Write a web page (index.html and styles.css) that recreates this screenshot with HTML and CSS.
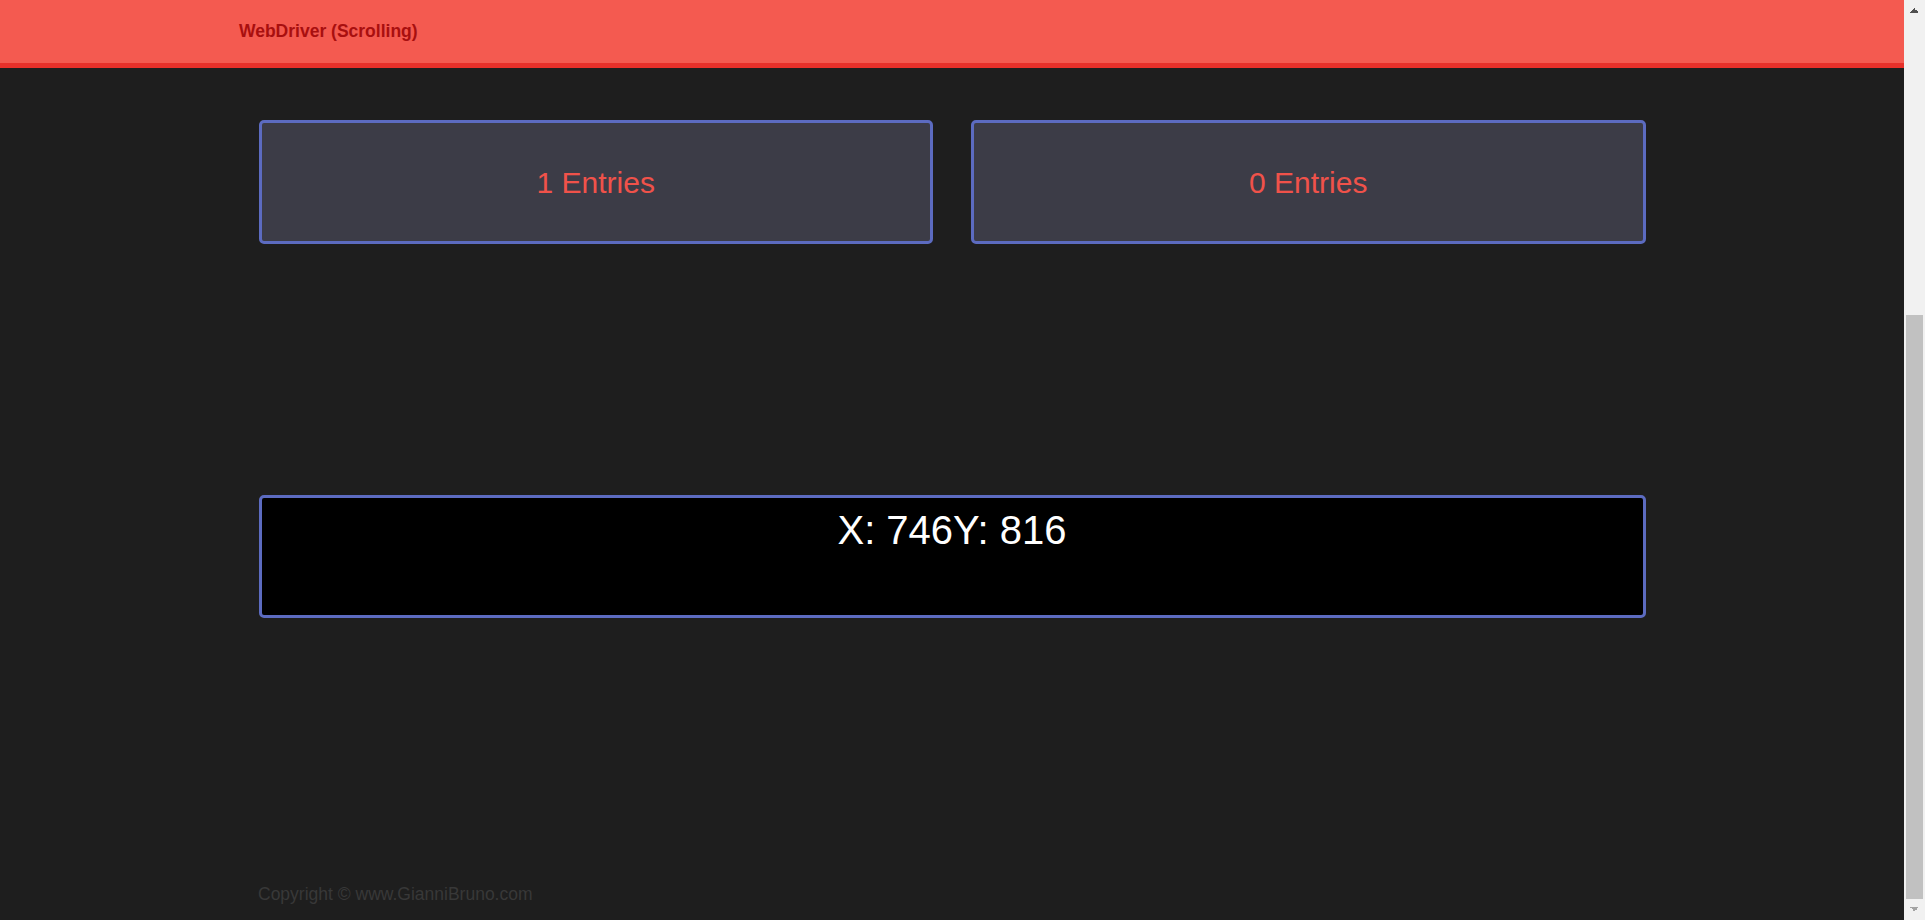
FILE: index.html
```html
<!DOCTYPE html>
<html lang="en">
<head>
<meta charset="utf-8">
<title>WebDriver (Scrolling)</title>
<link rel="stylesheet" href="styles.css">
</head>
<body>
<div class="window">
  <div class="page">
    <header class="topbar">
      <span class="title">WebDriver (Scrolling)</span>
    </header>
    <main class="content">
      <div class="row">
        <div class="entry-box"><span class="entries">1 Entries</span></div>
        <div class="entry-box"><span class="entries">0 Entries</span></div>
      </div>
      <div class="coords">X: 746Y: 816</div>
    </main>
    <footer class="footer">Copyright © www.GianniBruno.com</footer>
  </div>
  <div class="scrollbar">
    <div class="sb-btn sb-up"></div>
    <div class="sb-track"><div class="sb-thumb"></div></div>
    <div class="sb-btn sb-down"></div>
  </div>
</div>
</body>
</html>
```
FILE: styles.css
```css
html, body {
  margin: 0;
  padding: 0;
  height: 100%;
}
body {
  font-family: "Liberation Sans", Arial, sans-serif;
  font-size: 17.5px;
  background: #1e1e1e;
  overflow: hidden;
}
.window {
  display: flex;
  height: 920px;
}
.page {
  flex: 1;
  display: flex;
  flex-direction: column;
  background: #1e1e1e;
  min-width: 0;
}
.topbar {
  height: 63px;
  background: #f45a50;
  border-bottom: 5px solid #e8302a;
  display: flex;
  align-items: center;
  padding-left: 239px;
}
.title {
  font-weight: bold;
  font-size: 17.5px;
  color: #a80f0f;
}
.content {
  width: 1387px;
  margin: 52px auto 0;
}
.row {
  display: grid;
  grid-template-columns: 1fr 1fr;
  gap: 38px;
}
.entry-box {
  box-sizing: border-box;
  height: 124px;
  padding-top: 2px;
  background: #3c3c47;
  border: 3px solid #5c6bc0;
  border-radius: 5px;
  display: flex;
  align-items: center;
  justify-content: center;
}
.entries {
  color: #f0524a;
  font-size: 30px;
}
.coords {
  box-sizing: border-box;
  margin-top: 251px;
  height: 123px;
  background: #000;
  border: 3px solid #5c6bc0;
  border-radius: 5px;
  color: #fff;
  font-size: 40px;
  text-align: center;
  padding-top: 10px;
}
.footer {
  margin-top: auto;
  padding: 0 0 16px 258px;
  color: #383838;
  font-size: 17.5px;
  line-height: 20px;
}
.scrollbar {
  width: 21px;
  background: #f1f1f1;
  display: flex;
  flex-direction: column;
}
.sb-btn {
  height: 21px;
  flex: none;
}
.sb-up {
  background:
    linear-gradient(to top left, #505050 50%, transparent 50%) 6px 8px / 5px 5px no-repeat,
    linear-gradient(to top right, #505050 50%, transparent 50%) 10px 8px / 5px 5px no-repeat;
}
.sb-down {
  background:
    linear-gradient(to bottom left, #a3a3a3 50%, transparent 50%) 6px 8px / 5px 5px no-repeat,
    linear-gradient(to bottom right, #a3a3a3 50%, transparent 50%) 10px 8px / 5px 5px no-repeat;
}
.sb-track {
  flex: 1;
  display: flex;
  flex-direction: column;
  justify-content: flex-end;
  padding: 0 2px;
}
.sb-thumb {
  height: 584px;
  background: #c1c1c1;
}
```
